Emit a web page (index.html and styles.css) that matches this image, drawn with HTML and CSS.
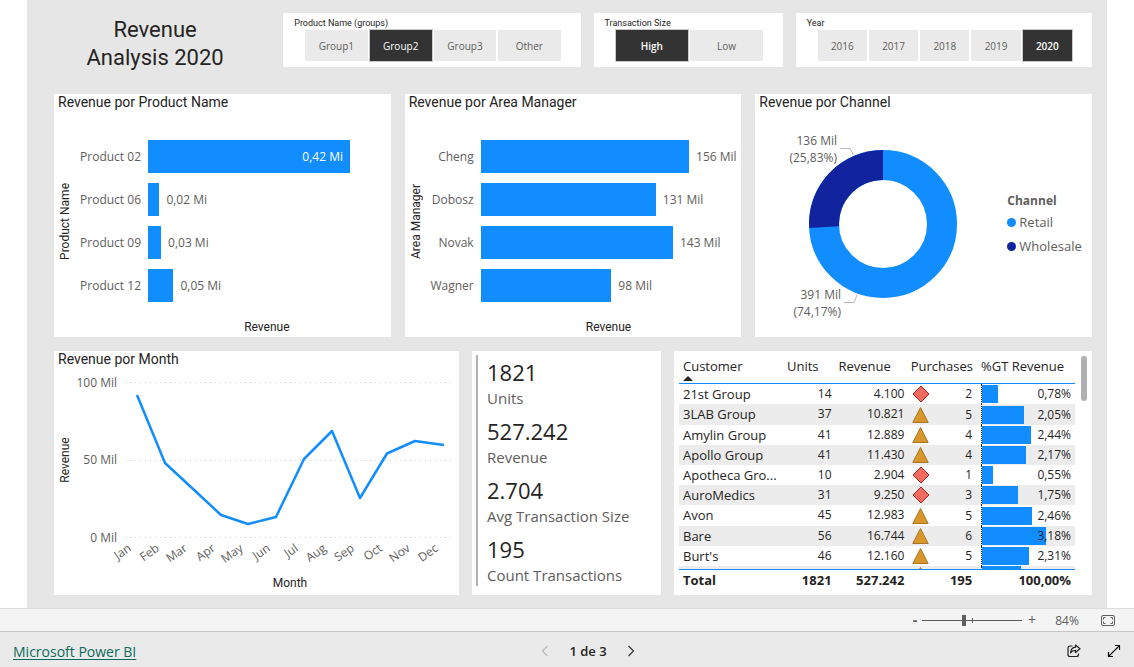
FILE: index.html
```html
<!DOCTYPE html>
<html lang="pt-BR">
<head>
<meta charset="utf-8">
<meta name="viewport" content="width=device-width, initial-scale=1">
<title>Revenue Analysis 2020</title>
<link rel="stylesheet" href="styles.css">
</head>
<body>
<main class="stage">
  <div class="report">
    <div class="row row-top">
      <h1 class="report-title">Revenue<br>Analysis 2020</h1>
      <section class="card slicer" aria-labelledby="s1">
        <h2 class="slicer-title" id="s1">Product Name (groups)</h2>
        <div class="tiles">
          <button class="tile" type="button">Group1</button>
          <button class="tile active" type="button" aria-pressed="true">Group2</button>
          <button class="tile" type="button">Group3</button>
          <button class="tile" type="button">Other</button>
        </div>
      </section>
      <section class="card slicer" aria-labelledby="s2">
        <h2 class="slicer-title" id="s2">Transaction Size</h2>
        <div class="tiles">
          <button class="tile active strong" type="button" aria-pressed="true">High</button>
          <button class="tile" type="button">Low</button>
        </div>
      </section>
      <section class="card slicer" aria-labelledby="s3">
        <h2 class="slicer-title" id="s3">Year</h2>
        <div class="tiles">
          <button class="tile" type="button">2016</button>
          <button class="tile" type="button">2017</button>
          <button class="tile" type="button">2018</button>
          <button class="tile" type="button">2019</button>
          <button class="tile active strong" type="button" aria-pressed="true">2020</button>
        </div>
      </section>
    </div>

    <div class="row row-middle">
      <section class="card">
        <h2 class="card-title">Revenue por Product Name</h2>
        <div class="bar-chart products">
          <div class="y-title">Product Name</div>
          <div class="bars">
            <div class="bar-row"><span class="bar-label">Product 02</span><span class="bar-plot"><span class="bar" style="width:85%"><span class="bar-inside">0,42 Mi</span></span></span></div>
            <div class="bar-row"><span class="bar-label">Product 06</span><span class="bar-plot"><span class="bar" style="width:4.8%"></span><span class="bar-value">0,02 Mi</span></span></div>
            <div class="bar-row"><span class="bar-label">Product 09</span><span class="bar-plot"><span class="bar" style="width:5.5%"></span><span class="bar-value">0,03 Mi</span></span></div>
            <div class="bar-row"><span class="bar-label">Product 12</span><span class="bar-plot"><span class="bar" style="width:10.7%"></span><span class="bar-value">0,05 Mi</span></span></div>
          </div>
          <div class="x-title">Revenue</div>
        </div>
      </section>

      <section class="card">
        <h2 class="card-title">Revenue por Area Manager</h2>
        <div class="bar-chart managers">
          <div class="y-title">Area Manager</div>
          <div class="bars">
            <div class="bar-row"><span class="bar-label">Cheng</span><span class="bar-plot"><span class="bar" style="width:81.5%"></span><span class="bar-value">156 Mil</span></span></div>
            <div class="bar-row"><span class="bar-label">Dobosz</span><span class="bar-plot"><span class="bar" style="width:68.5%"></span><span class="bar-value">131 Mil</span></span></div>
            <div class="bar-row"><span class="bar-label">Novak</span><span class="bar-plot"><span class="bar" style="width:75.2%"></span><span class="bar-value">143 Mil</span></span></div>
            <div class="bar-row"><span class="bar-label">Wagner</span><span class="bar-plot"><span class="bar" style="width:51.1%"></span><span class="bar-value">98 Mil</span></span></div>
          </div>
          <div class="x-title">Revenue</div>
        </div>
      </section>

      <section class="card">
        <h2 class="card-title">Revenue por Channel</h2>
        <div class="donut-body">
          <svg class="donut" viewBox="0 0 240 224" role="img" aria-label="Revenue por Channel">
            <circle cx="128" cy="112" r="59" fill="none" stroke="#118dff" stroke-width="30"/>
            <path d="M128 38 A74 74 0 0 0 54.1 115.9 L84.1 114.3 A44 44 0 0 1 128 68 Z" fill="#12239e"/>
            <g fill="none" stroke="#b8b8b8" stroke-width="1">
              <path d="M85 36.500H95L98.500 43"/>
              <path d="M89 190.500H99L102 183"/>
            </g>
            <g class="chart-text" text-anchor="end">
              <text x="82" y="33">136 Mil</text>
              <text x="82" y="50">(25,83%)</text>
              <text x="86" y="187">391 Mil</text>
              <text x="86" y="204">(74,17%)</text>
            </g>
          </svg>
          <div class="legend">
            <strong class="legend-title">Channel</strong>
            <ul class="legend-list">
              <li><span class="dot retail"></span>Retail</li>
              <li><span class="dot wholesale"></span>Wholesale</li>
            </ul>
          </div>
        </div>
      </section>
    </div>

    <div class="row row-bottom">
      <section class="card">
        <h2 class="card-title">Revenue por Month</h2>
        <svg class="line-chart" viewBox="0 0 405 225" role="img" aria-label="Revenue por Month">
          <g stroke="#d0d0d0" stroke-width="1" stroke-dasharray="1 4">
            <path d="M71 13.500H397"/><path d="M71 91.500H397"/><path d="M71 168.500H397"/>
          </g>
          <g class="chart-text" text-anchor="end">
            <text x="63" y="18">100 Mil</text>
            <text x="63" y="95">50 Mil</text>
            <text x="63" y="173">0 Mil</text>
          </g>
          <polyline points="83,26 111,94 138,119 167,146 194,155 222,148 250,90 278,62 306,129 333,84.500 361,72 390,76" fill="none" stroke="#118dff" stroke-width="2.500" stroke-linejoin="round"/>
          <g class="chart-text" text-anchor="end">
            <text transform="translate(78 181) rotate(-35)">Jan</text>
            <text transform="translate(106 181) rotate(-35)">Feb</text>
            <text transform="translate(134 181) rotate(-35)">Mar</text>
            <text transform="translate(162 181) rotate(-35)">Apr</text>
            <text transform="translate(190 181) rotate(-35)">May</text>
            <text transform="translate(217 181) rotate(-35)">Jun</text>
            <text transform="translate(245 181) rotate(-35)">Jul</text>
            <text transform="translate(273 181) rotate(-35)">Aug</text>
            <text transform="translate(301 181) rotate(-35)">Sep</text>
            <text transform="translate(329 181) rotate(-35)">Oct</text>
            <text transform="translate(357 181) rotate(-35)">Nov</text>
            <text transform="translate(385 181) rotate(-35)">Dec</text>
          </g>
          <g class="axis-text" text-anchor="middle">
            <text transform="translate(15 91) rotate(-90)">Revenue</text>
            <text x="236" y="218">Month</text>
          </g>
        </svg>
      </section>

      <section class="card kpi-card">
        <dl class="kpis">
          <div class="kpi"><dt>Units</dt><dd>1821</dd></div>
          <div class="kpi"><dt>Revenue</dt><dd>527.242</dd></div>
          <div class="kpi"><dt>Avg Transaction Size</dt><dd>2.704</dd></div>
          <div class="kpi"><dt>Count Transactions</dt><dd>195</dd></div>
        </dl>
      </section>

      <section class="card table-card">
        <svg class="symbols" aria-hidden="true">
          <symbol id="diamond" viewBox="0 0 18 18"><path d="M9 1 17 9 9 17 1 9Z" fill="#f26b5e" stroke="#a3241c" stroke-width="1"/></symbol>
          <symbol id="triangle" viewBox="0 0 18 18"><path d="M8.500 1.500 16.200 16.500H.8Z" fill="#d9962b" stroke="#a8752a" stroke-width="1"/></symbol>
        </svg>
        <table class="customers">
          <thead>
            <tr><th scope="col">Customer<span class="sort"></span></th><th scope="col">Units</th><th scope="col">Revenue</th><th scope="col">Purchases</th><th scope="col">%GT Revenue</th></tr>
          </thead>
          <tbody>
            <tr><td>21st Group</td><td>14</td><td>4.100</td><td class="flag"><svg><use href="#diamond"/></svg>2</td><td class="share"><span class="share-bar" style="width:17%"></span><span class="share-text">0,78%</span></td></tr>
            <tr><td>3LAB Group</td><td>37</td><td>10.821</td><td class="flag"><svg><use href="#triangle"/></svg>5</td><td class="share"><span class="share-bar" style="width:44.6%"></span><span class="share-text">2,05%</span></td></tr>
            <tr><td>Amylin Group</td><td>41</td><td>12.889</td><td class="flag"><svg><use href="#triangle"/></svg>4</td><td class="share"><span class="share-bar" style="width:53%"></span><span class="share-text">2,44%</span></td></tr>
            <tr><td>Apollo Group</td><td>41</td><td>11.430</td><td class="flag"><svg><use href="#triangle"/></svg>4</td><td class="share"><span class="share-bar" style="width:47.2%"></span><span class="share-text">2,17%</span></td></tr>
            <tr><td>Apotheca Gro...</td><td>10</td><td>2.904</td><td class="flag"><svg><use href="#diamond"/></svg>1</td><td class="share"><span class="share-bar" style="width:12%"></span><span class="share-text">0,55%</span></td></tr>
            <tr><td>AuroMedics</td><td>31</td><td>9.250</td><td class="flag"><svg><use href="#diamond"/></svg>3</td><td class="share"><span class="share-bar" style="width:38.1%"></span><span class="share-text">1,75%</span></td></tr>
            <tr><td>Avon</td><td>45</td><td>12.983</td><td class="flag"><svg><use href="#triangle"/></svg>5</td><td class="share"><span class="share-bar" style="width:53.5%"></span><span class="share-text">2,46%</span></td></tr>
            <tr><td>Bare</td><td>56</td><td>16.744</td><td class="flag"><svg><use href="#triangle"/></svg>6</td><td class="share"><span class="share-bar" style="width:69.1%"></span><span class="share-text">3,18%</span></td></tr>
            <tr><td>Burt's</td><td>46</td><td>12.160</td><td class="flag"><svg><use href="#triangle"/></svg>5</td><td class="share"><span class="share-bar" style="width:50.2%"></span><span class="share-text">2,31%</span></td></tr>
            <tr><td></td><td></td><td></td><td class="flag"><svg><use href="#triangle"/></svg></td><td class="share"><span class="share-bar" style="width:41.3%"></span></td></tr>
          </tbody>
          <tfoot>
            <tr><th scope="row">Total</th><td>1821</td><td>527.242</td><td>195</td><td>100,00%</td></tr>
          </tfoot>
        </table>
        <div class="scroll-thumb"></div>
      </section>
    </div>
  </div>
</main>

<div class="zoom-bar">
  <button class="zoom-step" type="button" aria-label="Zoom out">-</button>
  <input class="zoom-slider" type="range" min="0" max="100" value="42" aria-label="Zoom">
  <button class="zoom-step" type="button" aria-label="Zoom in">+</button>
  <span class="zoom-value">84%</span>
  <button class="icon-button" type="button" aria-label="Fit to page">
    <svg width="14" height="11" viewBox="0 0 14 11" fill="none" stroke="#605e5c"><rect x=".5" y=".5" width="13" height="10" rx="1.500"/><path d="M2.500 4.500v-2h2M9.500 2.500h2v2M11.500 6.500v2h-2M4.500 8.500h-2v-2"/></svg>
  </button>
</div>

<footer class="footer">
  <a class="brand" href="#">Microsoft Power BI</a>
  <nav class="pager" aria-label="Pages">
    <button class="icon-button" type="button" aria-label="Previous page" disabled><svg width="8" height="12" viewBox="0 0 8 12" fill="none" stroke="#b8b8b8" stroke-width="1.200"><path d="M6.500 1 1.500 6l5 5"/></svg></button>
    <span class="page-number">1 de 3</span>
    <button class="icon-button" type="button" aria-label="Next page"><svg width="8" height="12" viewBox="0 0 8 12" fill="none" stroke="#333" stroke-width="1.200"><path d="m1.500 1 5 5-5 5"/></svg></button>
  </nav>
  <div class="actions">
    <button class="icon-button" type="button" aria-label="Share"><svg width="14" height="14" viewBox="0 0 14 14" fill="none" stroke="#222" stroke-width="1.200" stroke-linejoin="round"><path d="M5.500 2H3A2 2 0 0 0 1 4v6.500a2 2 0 0 0 2 2h6.500a2 2 0 0 0 2-2V9.500"/><path d="M8.500 1 13 4.800 8.500 8.500V6.300C6 6.300 4.800 7 3.500 8.800 3.800 5.500 5.500 3.500 8.500 3.200Z"/></svg></button>
    <button class="icon-button" type="button" aria-label="Full screen"><svg width="14" height="14" viewBox="0 0 14 14" fill="none" stroke="#111" stroke-width="1.200"><path d="M1.500 12.500 12.500 1.500M8 1.500h4.500V6M1.500 8v4.500H6"/></svg></button>
  </div>
</footer>
</body>
</html>
```
FILE: styles.css
```css
* {
  box-sizing: border-box;
}

body {
  display: flex;
  flex-direction: column;
  min-height: 100vh;
  margin: 0;
  background: #fff;
  color: #252423;
  font-family: "Open Sans", "Noto Sans", sans-serif;
  font-size: 12px;
}

h1, h2, dl, dd, ul {
  margin: 0;
  padding: 0;
  font-weight: 400;
}

button {
  margin: 0;
  padding: 0;
  border: 0;
  background: none;
  color: inherit;
  font: inherit;
}

.stage {
  flex: 1;
  padding: 0 27px;
}

.report {
  min-height: 100%;
  padding: 13px 15px 13px 27px;
  background: #e6e6e6;
}

.row {
  display: grid;
  column-gap: 13px;
}

.row-top {
  grid-template-columns: 216fr 297fr 189fr 296fr;
  margin-bottom: 27px;
}

.row-middle {
  grid-template-columns: repeat(3, 1fr);
  column-gap: 14px;
  margin-bottom: 14px;
}

.row-bottom {
  grid-template-columns: 405fr 189fr 418fr;
}

.card {
  min-width: 0;
  background: #fff;
}

.report-title {
  height: 54px;
  padding: 3px 14px 0 0;
  font-family: Roboto, sans-serif;
  font-size: 22px;
  line-height: 28px;
  text-align: center;
}

/* Slicers */
.slicer {
  display: flex;
  flex-direction: column;
  padding: 4px 20px 6px 22px;
}

.slicer-title {
  margin-left: -11px;
  font-family: Roboto, sans-serif;
  font-size: 9px;
  line-height: 13px;
}

.tiles {
  display: flex;
  flex: 1;
  gap: 2px;
}

.tile {
  flex: 1;
  background: #eaeaea;
  color: #605e5c;
  font-size: 10px;
}

.tile.active {
  background: #333;
  box-shadow: 0 0 0 1px #c8c8c8;
  color: #fff;
}

.tile.strong {
  font-weight: 600;
}

/* Charts */
.card-title {
  padding: 0 0 2px 4px;
  font-family: Roboto, sans-serif;
  font-size: 14px;
  line-height: 16px;
}

.bar-chart {
  display: grid;
  grid-template-columns: 22px 1fr;
  padding: 28px 5px 3px 0;
}

.products {
  --label-width: 72px;
}

.managers {
  --label-width: 54px;
}

.y-title {
  align-self: center;
  justify-self: center;
  font-family: Roboto, sans-serif;
  font-size: 12px;
  line-height: 14px;
  transform: rotate(180deg);
  writing-mode: vertical-rl;
}

.x-title {
  grid-column: 2;
  margin: 18px 0 0 var(--label-width);
  font-family: Roboto, sans-serif;
  font-size: 12px;
  line-height: 14px;
  text-align: center;
}

.bars {
  display: grid;
  gap: 10px;
}

.bar-row {
  display: grid;
  grid-template-columns: var(--label-width) 1fr;
  align-items: center;
  height: 33px;
  color: #605e5c;
}

.bar-label {
  padding-right: 7px;
  text-align: right;
}

.bar-plot {
  display: flex;
  align-items: center;
  white-space: nowrap;
}

.bar {
  display: flex;
  flex-shrink: 0;
  align-items: center;
  justify-content: flex-end;
  height: 33px;
  background: #118dff;
}

.bar-inside {
  padding-right: 7px;
  color: #fff;
}

.bar-value {
  padding-left: 7px;
}

.chart-text {
  fill: #605e5c;
  font-size: 12px;
}

.axis-text {
  fill: #252423;
  font-family: Roboto, sans-serif;
  font-size: 12px;
}

.donut-body {
  display: flex;
  align-items: center;
  gap: 12px;
}

.donut {
  display: block;
  flex: 0 1 240px;
  min-width: 0;
}

.legend {
  padding-top: 2px;
  color: #605e5c;
  font-size: 13px;
}

.legend-title {
  display: block;
  font-size: 12px;
  font-weight: 700;
  line-height: 18px;
}

.legend-list {
  list-style: none;
}

.legend-list li {
  display: flex;
  align-items: center;
  gap: 3px;
  line-height: 24px;
}

.dot {
  width: 9px;
  height: 9px;
  border-radius: 50%;
}

.retail {
  background: #118dff;
}

.wholesale {
  background: #12239e;
}

.line-chart {
  display: block;
  width: 100%;
}

/* Multi-row card */
.kpi-card {
  padding: 4px 4px 8px;
}

.kpis {
  padding-left: 9px;
  border-left: 2px solid #b3b0ad;
}

.kpi {
  display: flex;
  flex-direction: column-reverse;
  padding: 2px 0 5px;
}

.kpi:last-child {
  padding-bottom: 0;
}

.kpi dd {
  font-size: 22px;
  line-height: 30px;
}

.kpi dt {
  color: #605e5c;
  font-size: 15px;
  line-height: 22px;
}

/* Table */
.table-card {
  display: flex;
  gap: 6px;
  padding: 5px;
}

.symbols {
  position: absolute;
  width: 0;
  height: 0;
}

.customers {
  display: flex;
  flex: 1;
  flex-direction: column;
  min-width: 0;
}

.customers tr {
  display: grid;
  grid-template-columns: 105fr 52fr 73fr 68fr 99fr;
}

.customers tbody {
  display: block;
  height: 187px;
  overflow: hidden;
  border-top: 1px solid #118dff;
  border-bottom: 1px solid #118dff;
}

.customers th,
.customers td {
  padding: 0 4px;
  line-height: 20px;
  text-align: right;
  white-space: nowrap;
}

.customers thead th {
  height: 27px;
  font-size: 13px;
  font-weight: 400;
  text-align: left;
}

.customers td:first-child,
.customers tfoot th {
  font-size: 13px;
  text-align: left;
}

.customers tbody tr:nth-child(5n + 2) {
  height: 21px;
}

.customers tbody tr:nth-child(even) {
  background: #ececec;
}

.customers tfoot th,
.customers tfoot td {
  font-size: 13px;
  font-weight: 700;
}

.sort {
  display: block;
  width: 0;
  border: 5px solid transparent;
  border-top: 0;
  border-bottom-color: #252423;
}

.customers .flag {
  display: flex;
  align-items: center;
  justify-content: space-between;
}

.flag svg {
  width: 18px;
  height: 18px;
}

.customers .share {
  display: grid;
  align-items: center;
  margin-left: 5px;
  padding: 0;
  border-left: 1px dotted #252423;
}

.share-bar,
.share-text {
  grid-area: 1 / 1;
}

.share-bar {
  height: 18px;
  background: #118dff;
}

.share-text {
  padding-right: 4px;
}

.scroll-thumb {
  width: 6px;
  height: 45px;
  border-radius: 3px;
  background: #b0b0b0;
}

/* Zoom bar */
.zoom-bar {
  display: flex;
  align-items: center;
  justify-content: flex-end;
  height: 24px;
  padding-right: 19px;
  border-top: 1px solid #dcdcdc;
  border-bottom: 1px solid #c6c6c6;
  background: #f4f4f4;
  color: #605e5c;
}

.zoom-step {
  width: 20px;
  font-size: 14px;
  line-height: 20px;
}

.zoom-step:first-child {
  width: 14px;
  font-weight: 700;
}

.zoom-slider {
  width: 100px;
  height: 12px;
  margin: 0;
  appearance: none;
  background:
    linear-gradient(#605e5c, #605e5c) center / 100% 1px no-repeat,
    linear-gradient(#605e5c, #605e5c) center / 1px 5px no-repeat;
}

.zoom-slider::-webkit-slider-thumb {
  width: 4px;
  height: 11px;
  appearance: none;
  background: #605e5c;
}

.zoom-value {
  width: 50px;
  margin-right: 9px;
  text-align: center;
}

.icon-button {
  display: flex;
  align-items: center;
  justify-content: center;
}

/* Footer */
.footer {
  display: grid;
  grid-template-columns: 1fr auto 1fr;
  align-items: center;
  height: 36px;
  padding: 2px 13px 0;
  background: #eaeaea;
}

.brand {
  justify-self: start;
  color: #0b6a5b;
  font-size: 14px;
  text-underline-offset: 2px;
}

.pager {
  display: flex;
  align-items: center;
  gap: 20px;
  margin-left: 42px;
}

.page-number {
  font-size: 13px;
  font-weight: 600;
}

.actions {
  display: flex;
  justify-content: flex-end;
  gap: 26px;
}
```
